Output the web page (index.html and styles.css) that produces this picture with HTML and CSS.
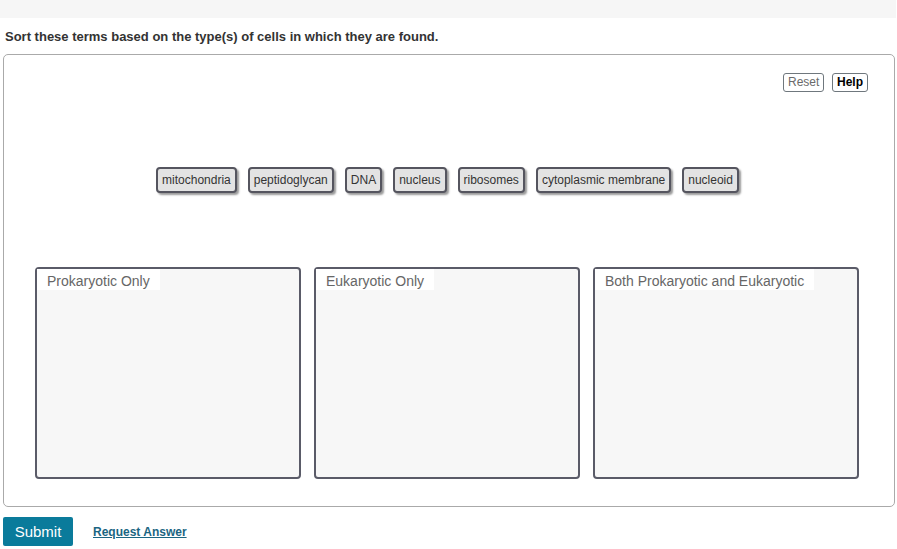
FILE: index.html
```html
<!DOCTYPE html>
<html lang="en">
<head>
<meta charset="utf-8">
<title>Sort terms</title>
<link rel="stylesheet" href="styles.css">
</head>
<body>
<div class="topbar"></div>
<div class="prompt">Sort these terms based on the type(s) of cells in which they are found.</div>
<div class="box">
  <div class="toolbar">
    <button class="tbtn reset">Reset</button>
    <button class="tbtn help">Help</button>
  </div>
  <div class="chips">
    <span class="chip">mitochondria</span>
    <span class="chip">peptidoglycan</span>
    <span class="chip">DNA</span>
    <span class="chip">nucleus</span>
    <span class="chip">ribosomes</span>
    <span class="chip">cytoplasmic membrane</span>
    <span class="chip">nucleoid</span>
  </div>
  <div class="bins">
    <div class="bin"><span class="bin-label">Prokaryotic Only</span></div>
    <div class="bin"><span class="bin-label">Eukaryotic Only</span></div>
    <div class="bin"><span class="bin-label">Both Prokaryotic and Eukaryotic</span></div>
  </div>
</div>
<div class="actions">
  <button class="submit">Submit</button>
  <a class="request" href="#">Request Answer</a>
</div>
</body>
</html>
```
FILE: styles.css
```css
html, body {
  margin: 0;
  padding: 0;
  background: #fff;
  font-family: "Liberation Sans", Arial, sans-serif;
  color: #333;
}
.topbar {
  height: 18px;
  background: #f6f6f6;
  margin-right: 1px;
}
.prompt {
  margin: 11px 0 9px 5px;
  font-size: 13px;
  line-height: 16px;
  font-weight: bold;
  color: #333;
}
.box {
  margin: 0 2px 0 3px;
  height: 433px;
  border: 1px solid #aaa;
  border-radius: 5px;
  padding-top: 18px;
  box-sizing: content-box;
}
.toolbar {
  display: flex;
  justify-content: flex-end;
  gap: 8px;
  padding-right: 26px;
  height: 19px;
}
.tbtn {
  margin: 0;
  height: 19px;
  padding: 0 4px;
  font-family: "Liberation Sans", Arial, sans-serif;
  font-size: 12px;
  line-height: 15px;
  background: #fff;
  border: 1px solid #6f777d;
  border-radius: 3px;
}
.reset { color: #6a6a6a; width: 41px; }
.help { color: #000; font-weight: bold; width: 36px; }
.chips {
  margin-top: 75px;
  display: flex;
  justify-content: center;
  gap: 11px;
  padding-right: 3px;
}
.chip {
  display: inline-block;
  height: 22px;
  line-height: 22px;
  padding: 0 4px;
  font-size: 12px;
  color: #333;
  background: #e3e3e3;
  border: 2px solid #55555f;
  border-radius: 4px;
  box-shadow: 2px 2px 2px rgba(0, 0, 0, 0.4);
}
.bins {
  margin-top: 74px;
  display: flex;
  gap: 13px;
  padding-left: 31px;
}
.bin {
  width: 262px;
  height: 208px;
  background: #f7f7f7;
  border: 2px solid #5a5b68;
  border-radius: 4px;
}
.bin-label {
  display: inline-block;
  background: #fff;
  padding: 3px 10px 0 10px;
  height: 18px;
  line-height: 19px;
  font-size: 14px;
  color: #666;
}
.actions {
  display: flex;
  align-items: center;
  gap: 20px;
  margin: 10px 0 0 3px;
}
.submit {
  margin: 0;
  width: 70px;
  height: 29px;
  border: 0;
  border-radius: 2px;
  background: #0a7b9b;
  color: #fff;
  font-family: "Liberation Sans", Arial, sans-serif;
  font-size: 15px;
}
.request {
  font-size: 12px;
  font-weight: bold;
  color: #1b6582;
  text-decoration: underline;
}
```
